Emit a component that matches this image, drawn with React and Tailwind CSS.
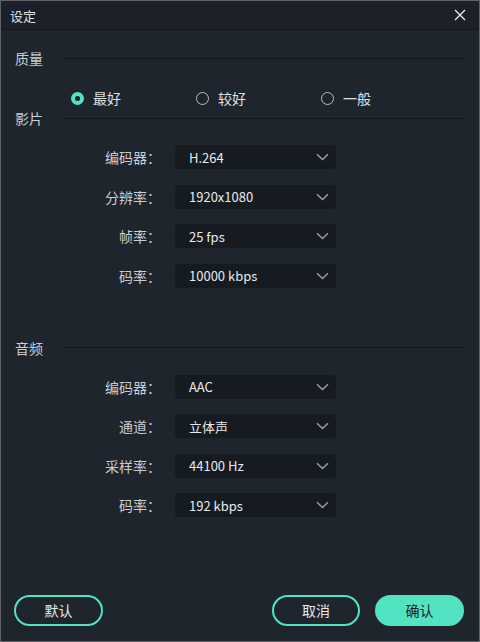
import React from "react";

const font = { fontFamily: '"Noto Sans CJK SC", "Noto Sans", sans-serif' };

function Chevron() {
  return (
    <svg width="13" height="8" viewBox="0 0 13 8" fill="none" className="shrink-0">
      <path d="M1 1.2 L6.5 6.5 L12 1.2" stroke="#9aa0a8" strokeWidth="1.4" />
    </svg>
  );
}

function Row({ label, value }) {
  return (
    <div className="flex items-center h-6">
      <div className="w-[160px] text-right text-[14px] text-[#c9cdd2] leading-none">{label}</div>
      <div className="ml-[14px] w-[161px] h-6 rounded-[4px] bg-[#161b22] flex items-center justify-between pl-[14px] pr-[7px]">
        <span className="text-[13px] text-[#e8eaec] leading-none">{value}</span>
        <Chevron />
      </div>
    </div>
  );
}

function Heading({ children }) {
  return (
    <div className="flex items-center h-5 pl-[14px] pr-[15px]">
      <span className="w-[48px] text-[14px] text-[#c9cdd2] leading-none">{children}</span>
      <div className="flex-1 h-px bg-[#14181d]" />
    </div>
  );
}

function Radio({ checked, label }) {
  return (
    <div className="w-[125px] flex items-center gap-[9px]">
      {checked ? (
        <span className="w-[13px] h-[13px] rounded-full bg-[#52e3c2] flex items-center justify-center">
          <span className="w-[5px] h-[5px] rounded-full bg-[#1b2027]" />
        </span>
      ) : (
        <span className="w-[13px] h-[13px] rounded-full border-[1.5px] border-[#b9bec4]" />
      )}
      <span className="text-[14px] text-[#dfe2e5] leading-none">{label}</span>
    </div>
  );
}

export default function App() {
  return (
    <div style={font} className="w-[480px] h-[642px] border border-[#5d6168] bg-[#1f252d] flex flex-col">
      <div className="h-[29px] bg-[#1c2129] border-b border-[#13161b] flex items-center justify-between pl-[9px] pr-[13px] shrink-0">
        <span className="text-[13px] text-[#dfe2e5] leading-none">设定</span>
        <svg width="12" height="12" viewBox="0 0 12 12">
          <path d="M1 1 L11 11 M11 1 L1 11" stroke="#e6e8ea" strokeWidth="1.4" />
        </svg>
      </div>
      <div className="mt-[18px]">
        <Heading>质量</Heading>
      </div>
      <div className="mt-[20px] h-5 flex items-center pl-[70px]">
        <Radio checked label="最好" />
        <Radio label="较好" />
        <Radio label="一般" />
      </div>
      <Heading>影片</Heading>
      <div className="mt-[17px] flex flex-col gap-[15.5px]">
        <Row label="编码器：" value="H.264" />
        <Row label="分辨率：" value="1920x1080" />
        <Row label="帧率：" value="25 fps" />
        <Row label="码率：" value="10000 kbps" />
      </div>
      <div className="mt-[50px]">
        <Heading>音频</Heading>
      </div>
      <div className="mt-[17px] flex flex-col gap-[15.5px]">
        <Row label="编码器：" value="AAC" />
        <Row label="通道：" value="立体声" />
        <Row label="采样率：" value="44100 Hz" />
        <Row label="码率：" value="192 kbps" />
      </div>
      <div className="mt-auto mb-[15px] flex items-center pl-[13px] pr-[15px]">
        <button className="w-[89px] h-[31px] rounded-full border-2 border-[#52e3c2] text-[14px] text-[#e6e8ea]">默认</button>
        <div className="flex-1" />
        <button className="w-[88px] h-[31px] rounded-full border-2 border-[#52e3c2] text-[14px] text-[#e6e8ea]">取消</button>
        <button className="ml-[15px] w-[89px] h-[31px] rounded-full bg-[#52e3c2] text-[14px] text-[#1b2027]">确认</button>
      </div>
    </div>
  );
}
